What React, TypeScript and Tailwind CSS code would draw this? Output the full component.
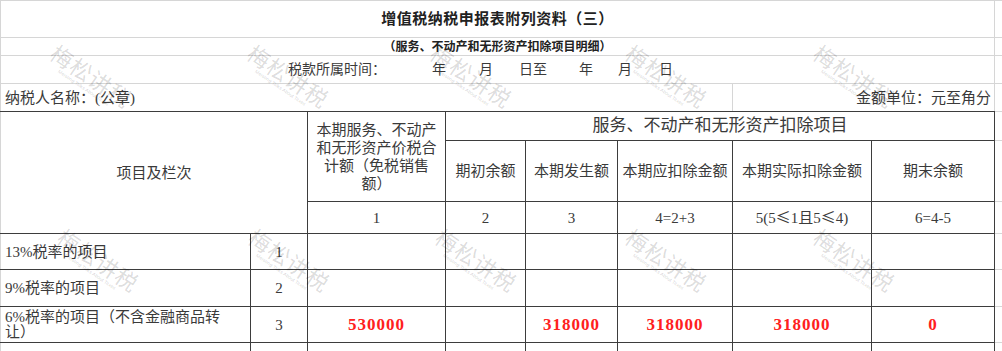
const marks = [
  { x: 90, y: 78 },
  { x: 287, y: 78 },
  { x: 470, y: 78 },
  { x: 665, y: 78 },
  { x: 853, y: 78 },
  { x: 1043, y: 78 },
  { x: 97, y: 262 },
  { x: 288, y: 262 },
  { x: 475, y: 262 },
  { x: 665, y: 262 },
  { x: 853, y: 262 },
  { x: 1043, y: 262 },
]

function Watermark({ x, y }: { x: number; y: number }) {
  return (
    <div
      className="absolute flex w-[100px] -translate-x-1/2 -translate-y-1/2 rotate-[34deg] flex-col items-center"
      style={{ left: x, top: y }}
    >
      <span className="text-[22px] leading-none tracking-[1px] text-black/15 font-['Noto_Sans_CJK_SC',sans-serif]">
        梅松讲税
      </span>
      <span className="mt-[2px] text-[5px] leading-none text-black/20 font-['Liberation_Sans',sans-serif]">
        Meisong Talks About Taxes
      </span>
    </div>
  )
}

const light = 'border border-[#d6d6d6]'
const dark = 'border border-[#3d3d3d]'
const red = "text-[17px] font-bold tracking-[1px] text-[#ff2020] font-['Liberation_Serif',serif]"
const le = <span className="font-['Noto_Sans_CJK_SC',sans-serif]">≤</span>

export default function App() {
  return (
    <div className="relative h-[351px] w-[1002px] overflow-hidden bg-white text-[#3a3a3a] font-['Liberation_Serif','Noto_Sans_CJK_SC',serif]">
      <table className="w-[1002px] table-fixed border-collapse text-[15px] leading-[18px]">
        <colgroup>
          <col className="w-[250px]" />
          <col className="w-[57px]" />
          <col className="w-[138px]" />
          <col className="w-[80px]" />
          <col className="w-[92px]" />
          <col className="w-[115px]" />
          <col className="w-[139px]" />
          <col className="w-[123px]" />
          <col className="w-[8px]" />
        </colgroup>
        <tbody>
          <tr>
            <td colSpan={8} className={`${light} h-[37px] text-center text-[15px] font-bold tracking-[0.5px] text-[#222]`}>
              增值税纳税申报表附列资料（三）
            </td>
            <td className={light}></td>
          </tr>
          <tr>
            <td colSpan={8} className={`${light} h-[18px] text-center text-[12px] leading-[14px] font-bold text-[#222]`}>
              （服务、不动产和无形资产扣除项目明细）
            </td>
            <td className={light}></td>
          </tr>
          <tr>
            <td colSpan={8} className={`${light} h-[28px] text-[14px]`}>
              <div className="flex pl-[287px]">
                <span>税款所属时间：</span>
                <span className="ml-[46px]">年</span>
                <span className="ml-[33px]">月</span>
                <span className="ml-[26px]">日至</span>
                <span className="ml-[32px]">年</span>
                <span className="ml-[25px]">月</span>
                <span className="ml-[27px]">日</span>
              </div>
            </td>
            <td className={light}></td>
          </tr>
          <tr>
            <td colSpan={6} className={`${light} h-[28px] border-b-[#3d3d3d] pl-1`}>
              纳税人名称：(公章)
            </td>
            <td colSpan={2} className={`${light} border-b-[#3d3d3d] pr-[3px] text-right`}>
              金额单位：元至角分
            </td>
            <td className={light}></td>
          </tr>

          <tr>
            <td colSpan={2} rowSpan={3} className={`${dark} border-l-[#d6d6d6] text-center`}>
              项目及栏次
            </td>
            <td rowSpan={2} className={`${dark} px-[8px] text-center`}>
              本期服务、不动产和无形资产价税合计额（免税销售额）
            </td>
            <td colSpan={5} className={`${dark} h-[29px] text-center text-[17px] leading-[20px]`}>
              服务、不动产和无形资产扣除项目
            </td>
            <td className={light}></td>
          </tr>
          <tr>
            <td className={`${dark} h-[61px] text-center`}>期初余额</td>
            <td className={`${dark} text-center`}>本期发生额</td>
            <td className={`${dark} text-center`}>本期应扣除金额</td>
            <td className={`${dark} text-center`}>本期实际扣除金额</td>
            <td className={`${dark} text-center`}>期末余额</td>
            <td className={light}></td>
          </tr>
          <tr>
            <td className={`${dark} h-[32px] text-center`}>1</td>
            <td className={`${dark} text-center`}>2</td>
            <td className={`${dark} text-center`}>3</td>
            <td className={`${dark} text-center`}>4=2+3</td>
            <td className={`${dark} text-center`}>
              5(5{le}1且5{le}4)
            </td>
            <td className={`${dark} text-center`}>6=4-5</td>
            <td className={light}></td>
          </tr>

          <tr>
            <td className={`${dark} h-[36px] border-l-[#d6d6d6] pl-1`}>13%税率的项目</td>
            <td className={`${dark} text-center`}>1</td>
            <td className={dark}></td>
            <td className={dark}></td>
            <td className={dark}></td>
            <td className={dark}></td>
            <td className={dark}></td>
            <td className={dark}></td>
            <td className={light}></td>
          </tr>
          <tr>
            <td className={`${dark} h-[37px] border-l-[#d6d6d6] pl-1`}>9%税率的项目</td>
            <td className={`${dark} text-center`}>2</td>
            <td className={dark}></td>
            <td className={dark}></td>
            <td className={dark}></td>
            <td className={dark}></td>
            <td className={dark}></td>
            <td className={dark}></td>
            <td className={light}></td>
          </tr>
          <tr>
            <td className={`${dark} h-[36px] border-l-[#d6d6d6] pl-1 pr-[14px] leading-[15px]`}>
              6%税率的项目（不含金融商品转让）
            </td>
            <td className={`${dark} text-center`}>3</td>
            <td className={`${dark} text-center ${red}`}>530000</td>
            <td className={dark}></td>
            <td className={`${dark} text-center ${red}`}>318000</td>
            <td className={`${dark} text-center ${red}`}>318000</td>
            <td className={`${dark} text-center ${red}`}>318000</td>
            <td className={`${dark} text-center ${red}`}>0</td>
            <td className={light}></td>
          </tr>
          <tr>
            <td className={`${dark} h-[36px] border-l-[#d6d6d6]`}></td>
            <td className={dark}></td>
            <td className={dark}></td>
            <td className={dark}></td>
            <td className={dark}></td>
            <td className={dark}></td>
            <td className={dark}></td>
            <td className={dark}></td>
            <td className={light}></td>
          </tr>
        </tbody>
      </table>

      <div className="pointer-events-none absolute inset-0">
        {marks.map((m, i) => (
          <Watermark key={i} x={m.x} y={m.y} />
        ))}
      </div>
    </div>
  )
}
